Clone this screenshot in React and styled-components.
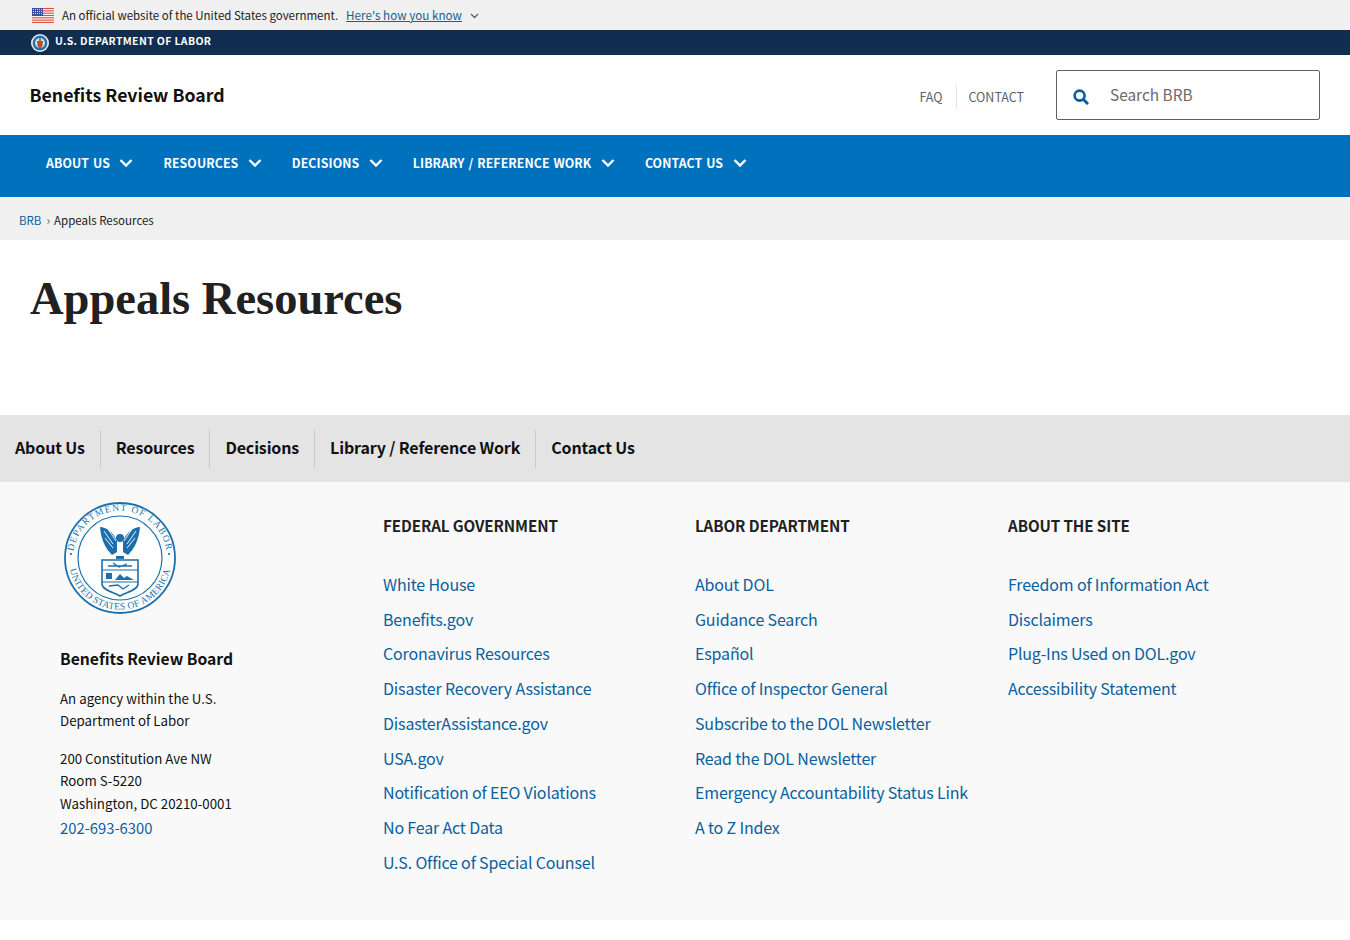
import React from 'react';
import styled, { createGlobalStyle } from 'styled-components';

const sans = '"Noto Sans CJK SC", "Noto Sans", sans-serif';
const linkBlue = '#0a5f9f';

const Global = createGlobalStyle`
  html, body { margin: 0; padding: 0; background: #fff; }
  body { font-family: ${sans}; color: #111; }
  a { text-decoration: none; }
  * { box-sizing: border-box; }
`;

const Page = styled.div`width: 1350px; height: 940px; overflow: hidden; background: #fff;`;

const GovBanner = styled.div`
  height: 30px; background: #f0f0f0; display: flex; align-items: center; padding-left: 32px;
  font-size: 11.5px; line-height: 30px; color: #212121;
`;
const BannerText = styled.span`margin-left: 8px;`;
const BannerLink = styled.a`margin-left: 8px; color: #1a5f8f; text-decoration: underline; font-size: 11.7px;`;
const BannerChevron = styled.svg`margin-left: 8px; margin-top: 2px;`;

const DeptBar = styled.div`
  height: 25px; background: #112e51; display: flex; align-items: center; padding-left: 31px;
  color: #fff; font-size: 10.5px; font-weight: 700; letter-spacing: .35px;
`;
const DeptName = styled.span`margin-left: 6px; margin-top: -3px; line-height: 20px;`;

const Header = styled.header`
  height: 80px; background: #fff; display: flex; align-items: center; padding: 0 30px;
`;
const SiteName = styled.div`font-size: 17.7px; font-weight: 700; color: #111; line-height: 24px; flex: 1; margin-top: -3px; margin-left: -.5px;`;
const Utility = styled.div`display: flex; align-items: center; margin-right: 32px; margin-top: 4px;`;
const UtilityLink = styled.a`
  font-size: 12.5px; line-height: 24px; color: #5b616b; padding: 0 13px 0 12px;
  & + & { border-left: 1px solid #e4e4e4; }
  &:last-child { padding-right: 0; }
`;
const SearchBox = styled.div`
  width: 264px; height: 50px; border: 1px solid #5b616b; border-radius: 2px;
  display: flex; align-items: center; padding-left: 16px; background: #fff;
`;
const SearchIcon = styled.svg`margin-top: 3px;`;
const SearchText = styled.span`margin-left: 21px; margin-top: -3px; font-size: 15.4px; color: #6b6b6b; line-height: 24px;`;

const MainNav = styled.nav`
  height: 62px; background: #0071bc; display: flex; align-items: flex-start; padding: 16px 0 0 30px;
`;
const MainItem = styled.a`
  display: flex; align-items: center; height: 24px; padding: 0 14px 0 16px; color: #fff;
  font-size: 12.3px; font-weight: 700; letter-spacing: .1px; word-spacing: 1px; line-height: 24px;
`;
const MainChevron = styled.svg`margin-left: 9.5px;`;

const Crumbs = styled.div`
  height: 43px; background: #f0f0f0; display: flex; align-items: center; padding: 3px 0 0 19px;
  font-size: 11.5px; line-height: 20px; color: #212121;
`;
const CrumbLink = styled.a`color: ${linkBlue};`;
const CrumbSep = styled.span`margin: 0 4px 0 5px; color: #5b616b; font-size: 12px;`;

const TitleArea = styled.section`height: 175px; padding: 32px 30px 0;`;
const Title = styled.h1`
  margin: 0; font-family: "Liberation Serif", serif; font-weight: 700; font-size: 46.5px; line-height: 54px;
  color: #212121;
`;

const FootNav = styled.nav`
  height: 67px; background: #e4e4e4; display: flex; align-items: center; padding-top: 1px;
`;
const FootNavItem = styled.a`
  display: flex; align-items: center; height: 38px; padding: 0 15px 5px; font-size: 16px; font-weight: 700; color: #111;
  letter-spacing: -.15px;
  & + & { border-left: 1px solid #c9c9c9; }
`;

const Footer = styled.footer`
  height: 438px; background: #f9f9f9; display: grid; grid-template-columns: 383px 312px 313px 1fr; padding-top: 20px;
`;
const Agency = styled.div`padding-left: 60px; color: #111;`;
const Seal = styled.svg`display: block; margin-left: 4px;`;
const AgencyName = styled.div`margin-top: 33px; font-size: 15.7px; font-weight: 700; line-height: 24px;`;
const AgencyPara = styled.p`margin: 0; font-size: 13.3px; line-height: 22.4px; &:first-of-type { margin-top: 17px; } & + & { margin-top: 15px; }`;
const Phone = styled.a`display: block; font-size: 14.8px; line-height: 24px; color: ${linkBlue}; margin-top: 1px;`;
const LinkCol = styled.div`padding-top: 11px;`;
const ColTitle = styled.h3`margin: 0 0 34.8px; font-size: 15.2px; font-weight: 700; line-height: 24px; color: #212121; text-transform: uppercase; letter-spacing: -.1px;`;
const FootLink = styled.a`display: block; font-size: 16px; line-height: 24px; margin-bottom: 10.75px; color: ${linkBlue}; letter-spacing: -.17px;`;

const Flag = () => (
  <svg width="22" height="15" viewBox="0 0 22 15">
    <rect width="22" height="15" fill="#fff" />
    {[0, 2, 4, 6, 8, 10, 12].map(y => <rect key={y} y={y * 1.154} width="22" height="1.154" fill="#d8503f" />)}
    <rect width="11" height="8" fill="#3d4da8" />
    {[1.5, 3.5, 5.5].map(y => [1.5, 3.5, 5.5, 7.5, 9.5].map(x => <circle key={x + '-' + y} cx={x} cy={y} r=".5" fill="#fff" />))}
  </svg>
);

const MiniSeal = () => (
  <svg width="18" height="18" viewBox="0 0 18 18">
    <circle cx="9" cy="9" r="9" fill="#e9eef2" />
    <circle cx="9" cy="9" r="7.4" fill="#2d6ea3" />
    <circle cx="9" cy="9" r="5" fill="#cfe0ea" />
    <path d="M6 7h6l-.6 5L9 14.5 6.6 12z" fill="#b5502a" />
    <rect x="8.3" y="4" width="1.4" height="3.4" fill="#37694a" />
  </svg>
);

const Chevron = () => (
  <MainChevron width="14" height="10" viewBox="0 0 14 10">
    <path d="M1.5 2 7 7.5 12.5 2" fill="none" stroke="#fff" strokeWidth="2.4" />
  </MainChevron>
);

const BigSeal = () => (
  <Seal width="112" height="112" viewBox="0 0 112 112">
    <defs>
      <path id="top-arc" d="M10.6 68A47 47 0 1 1 101.4 68" />
      <path id="bottom-arc" d="M5.7 45A51.5 51.5 0 1 0 106.3 45" />
    </defs>
    <circle cx="56" cy="56" r="55" fill="#fff" stroke="#1c6fae" strokeWidth="1.8" />
    <circle cx="56" cy="56" r="42" fill="#fff" stroke="#1c6fae" strokeWidth="1.2" />
    <text fontFamily='"Liberation Serif", serif' fontSize="9.5" fill="#1c6fae" letterSpacing="1.2">
      <textPath href="#top-arc" startOffset="50%" textAnchor="middle">DEPARTMENT OF LABOR</textPath>
    </text>
    <text fontFamily='"Liberation Serif", serif' fontSize="9.5" fill="#1c6fae" letterSpacing=".3">
      <textPath href="#bottom-arc" startOffset="50%" textAnchor="middle">UNITED STATES OF AMERICA</textPath>
    </text>
    <circle cx="7" cy="52" r="1.1" fill="#1c6fae" />
    <circle cx="105" cy="52" r="1.1" fill="#1c6fae" />
    <path d="M36 25c6 0 13 5 17 14v11l-5 3C42 47 37 38 36 25zM76 25c-6 0-13 5-17 14v11l5 3c6-6 11-15 12-28z" fill="#1c6fae" />
    <path d="M40 29l9 13M44 27l8 12M41 36l8 10M72 29l-9 13M68 27l-8 12M71 36l-8 10" stroke="#fff" strokeWidth=".9" />
    <circle cx="56" cy="36" r="4" fill="#1c6fae" />
    <path d="M52 54h8v3h-8z" fill="#1c6fae" />
    <path d="M38 58h36v24c0 6-11 8-18 12-7-4-18-6-18-12z" fill="#fff" stroke="#1c6fae" strokeWidth="1.6" />
    <path d="M38 68h36M38 80h36" stroke="#1c6fae" strokeWidth="1" />
    <path d="M44 64h24M49 61l6 4 8-3" stroke="#1c6fae" strokeWidth="1.3" fill="none" />
    <rect x="42" y="71" width="6" height="6" fill="#1c6fae" />
    <path d="M51 78l5-6 4 4 3-2 7 4z" fill="#1c6fae" />
    <path d="M45 84l9-1 5 4 6-4" stroke="#1c6fae" strokeWidth="1.3" fill="none" />
  </Seal>
);

const mainItems = ['About Us', 'Resources', 'Decisions', 'Library / Reference Work', 'Contact Us'];
const footerCols = [
  ['Federal Government', ['White House', 'Benefits.gov', 'Coronavirus Resources', 'Disaster Recovery Assistance', 'DisasterAssistance.gov', 'USA.gov', 'Notification of EEO Violations', 'No Fear Act Data', 'U.S. Office of Special Counsel']],
  ['Labor Department', ['About DOL', 'Guidance Search', 'Español', 'Office of Inspector General', 'Subscribe to the DOL Newsletter', 'Read the DOL Newsletter', 'Emergency Accountability Status Link', 'A to Z Index']],
  ['About the Site', ['Freedom of Information Act', 'Disclaimers', 'Plug-Ins Used on DOL.gov', 'Accessibility Statement']],
];

export default function App() {
  return (
    <Page>
      <Global />
      <GovBanner>
        <Flag />
        <BannerText>An official website of the United States government.</BannerText>
        <BannerLink href="#">Here's how you know</BannerLink>
        <BannerChevron width="9" height="6" viewBox="0 0 9 6">
          <path d="M1 1l3.5 3.5L8 1" fill="none" stroke="#5b616b" strokeWidth="1.3" />
        </BannerChevron>
      </GovBanner>
      <DeptBar>
        <MiniSeal />
        <DeptName>U.S. DEPARTMENT OF LABOR</DeptName>
      </DeptBar>
      <Header>
        <SiteName>Benefits Review Board</SiteName>
        <Utility>
          <UtilityLink href="#">FAQ</UtilityLink>
          <UtilityLink href="#">CONTACT</UtilityLink>
        </Utility>
        <SearchBox>
          <SearchIcon width="16" height="16" viewBox="0 0 16 16">
            <circle cx="6.6" cy="6.6" r="5" fill="none" stroke="#0b5d9e" strokeWidth="2.6" />
            <path d="M10.3 10.3 15 15" stroke="#0b5d9e" strokeWidth="3" />
          </SearchIcon>
          <SearchText>Search BRB</SearchText>
        </SearchBox>
      </Header>
      <MainNav>
        {mainItems.map(item => (
          <MainItem href="#" key={item}>
            {item.toUpperCase()}
            <Chevron />
          </MainItem>
        ))}
      </MainNav>
      <Crumbs>
        <CrumbLink href="#">BRB</CrumbLink>
        <CrumbSep>›</CrumbSep>
        <span>Appeals Resources</span>
      </Crumbs>
      <TitleArea>
        <Title>Appeals Resources</Title>
      </TitleArea>
      <FootNav>
        {mainItems.map(item => <FootNavItem href="#" key={item}>{item}</FootNavItem>)}
      </FootNav>
      <Footer>
        <Agency>
          <BigSeal />
          <AgencyName>Benefits Review Board</AgencyName>
          <AgencyPara>An agency within the U.S.<br />Department of Labor</AgencyPara>
          <AgencyPara>200 Constitution Ave NW<br />Room S-5220<br />Washington, DC 20210-0001</AgencyPara>
          <Phone href="#">202-693-6300</Phone>
        </Agency>
        {footerCols.map(([title, links]) => (
          <LinkCol key={title}>
            <ColTitle>{title}</ColTitle>
            {links.map(l => <FootLink href="#" key={l}>{l}</FootLink>)}
          </LinkCol>
        ))}
      </Footer>
    </Page>
  );
}
